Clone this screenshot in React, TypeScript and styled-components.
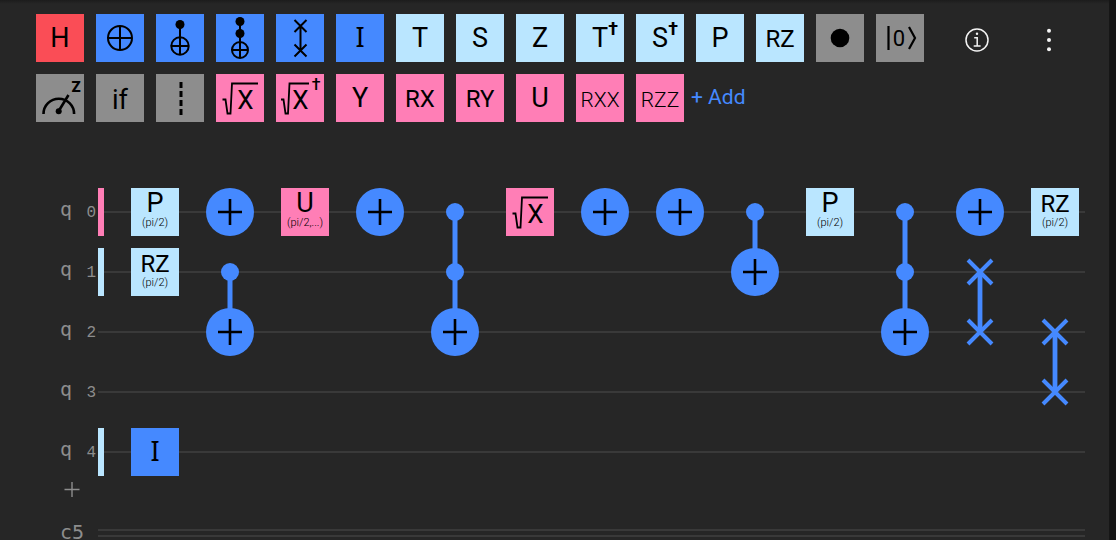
import React from "react";
import styled, { createGlobalStyle, css } from "styled-components";

const color = {
  page: "#161616",
  panel: "#262626",
  wire: "#393939",
  label: "#8d8d8d",
  red: "#fa4d56",
  blue: "#4589ff",
  sky: "#bae6ff",
  pink: "#ff7eb6",
  gray: "#8d8d8d",
};

type Tone = "red" | "blue" | "sky" | "pink" | "gray";

const GlobalStyle = createGlobalStyle`
  * { box-sizing: border-box; }
  body {
    margin: 0;
    background: ${color.page};
    font-family: Roboto, "Liberation Sans", sans-serif;
  }
`;

const Composer = styled.main`
  height: 100vh;
  margin-right: 7px;
  overflow: hidden;
  background: linear-gradient(#1c1c1c, ${color.panel} 4px);
`;

const Toolbar = styled.header`
  display: flex;
  justify-content: space-between;
  align-items: flex-start;
  padding: 14px 36px 0;
`;

const Palette = styled.div`
  display: flex;
  flex-direction: column;
  gap: 12px;
`;

const PaletteRow = styled.div`
  display: flex;
  gap: 7px;
`;

const GateGroup = styled.div`
  display: flex;
  gap: 12px;
`;

const PlainButton = styled.button`
  border: 0;
  padding: 0;
  background: none;
  color: inherit;
  font-family: inherit;
  cursor: pointer;
`;

const Gate = styled(PlainButton)<{ $tone: Tone }>`
  position: relative;
  flex: none;
  width: 48px;
  height: 48px;
  background: ${(p) => color[p.$tone]};
  color: #000;
  font-size: 27px;
  font-weight: 400;
  line-height: 48px;
  text-align: center;
  white-space: nowrap;
`;

const Symbol = styled.span<{ $length: number; $serif?: boolean }>`
  display: inline-block;
  line-height: 1;
  font-size: ${(p) => (p.$length > 2 ? 21 : p.$length > 1 ? 24 : 27)}px;
  font-weight: ${(p) => (p.$length > 2 ? 300 : 400)};
  ${(p) =>
    p.$serif &&
    css`
      font-family: "Noto Sans", sans-serif;
    `}
`;

const Dagger = styled.sup`
  position: absolute;
  top: 6px;
  right: 6px;
  font-size: 18px;
  font-weight: 700;
  line-height: 18px;
`;

const ParamGate = styled(Gate)`
  display: flex;
  flex-direction: column;
  align-items: center;
`;

const ParamName = styled.span`
  height: 28px;
  line-height: 31px;
`;

const Param = styled.span`
  font-size: 11px;
  font-weight: 300;
  line-height: 14px;
`;

const Art = styled.svg`
  display: block;
  overflow: visible;
`;

const AddButton = styled(PlainButton)`
  height: 45px;
  color: ${color.blue};
  font-size: 21px;
  font-weight: 400;
`;

const Tools = styled.div`
  display: flex;
  gap: 24px;
`;

const ToolButton = styled(PlainButton)`
  display: grid;
  place-items: center;
  width: 48px;
  height: 52px;
`;

const Circuit = styled.section`
  display: grid;
  padding: 60px 24px 0 60px;
`;

const Wires = styled.div`
  grid-area: 1 / 1;
  color: ${color.label};
`;

const Register = styled.div`
  display: flex;
  align-items: center;
  height: 60px;
`;

const RegisterName = styled.span`
  display: flex;
  flex: none;
  width: 38px;
  height: 60px;
  font-family: "DejaVu Sans Mono", monospace;
  font-size: 20px;
  line-height: 54px;
`;

const ClassicalName = styled(RegisterName)`
  line-height: 58px;
`;

const RegisterIndex = styled.span`
  margin-left: auto;
  padding-right: 2px;
  font-family: "Liberation Mono", monospace;
  font-size: 16px;
  line-height: 62px;
`;

const Phase = styled.span<{ $tone: Tone }>`
  width: 6px;
  height: 48px;
  background: ${(p) => color[p.$tone]};
`;

const Wire = styled.span`
  flex: 1;
  height: 2px;
  background: ${color.wire};
`;

const DoubleWire = styled.span`
  flex: 1;
  height: 8px;
  border: solid ${color.wire};
  border-width: 2px 0;
`;

const AddQubit = styled(PlainButton)`
  display: block;
  width: 24px;
  height: 15px;
  margin-bottom: 6px;
`;

const GateLayer = styled.div`
  grid-area: 1 / 1;
  display: grid;
  grid-template-columns: repeat(13, 48px);
  grid-template-rows: repeat(5, 60px);
  align-content: start;
  column-gap: 27px;
  margin-left: 71px;
`;

const Slot = styled.div<{ $column: number; $row: number; $span: number }>`
  grid-column: ${(p) => p.$column};
  grid-row: ${(p) => p.$row + 1} / span ${(p) => p.$span};
  padding: 6px 0;
`;

const LINE = { fill: "none", stroke: "#000", strokeWidth: 2 };

function Oplus({ cy = 24, r = 12 }) {
  return <path {...LINE} d={`M${24 - r} ${cy}a${r} ${r} 0 1 1 ${2 * r} 0a${r} ${r} 0 1 1 ${-2 * r} 0H${24 + r}M24 ${cy - r}v${2 * r}`} />;
}

const GateArt = ({ children }: { children: React.ReactNode }) => (
  <Art width="48" height="48" viewBox="0 0 48 48" aria-hidden="true">{children}</Art>
);

const art: Record<string, React.ReactNode> = {
  not: <GateArt><Oplus /></GateArt>,
  cnot: (
    <GateArt>
      <circle cx="24" cy="10.5" r="4.5" />
      <path {...LINE} d="M24 10V24" />
      <Oplus cy={32} r={8.7} />
    </GateArt>
  ),
  toffoli: (
    <GateArt>
      <circle cx="24" cy="7.5" r="4.5" />
      <circle cx="24" cy="19.5" r="4.5" />
      <path {...LINE} d="M24 7V28" />
      <Oplus cy={36} r={8} />
    </GateArt>
  ),
  swap: (
    <GateArt>
      <path {...LINE} d="M24.5 12V36M18.5 6l12 12m0-12l-12 12M18.5 30.5l12 12m0-12l-12 12" />
    </GateArt>
  ),
  control: <GateArt><circle cx="24" cy="24" r="9.3" /></GateArt>,
  reset: (
    <GateArt>
      <path {...LINE} strokeWidth={2.2} d="M12.5 12V36M33 13l6 11l-6 11" />
      <text x="23" y="32" fontSize="22" fontWeight="400" textAnchor="middle">0</text>
    </GateArt>
  ),
  measure: (
    <GateArt>
      <path {...LINE} strokeWidth={2.6} d="M7.5 40a15.3 15.3 0 0 1 30.6 0M22.7 37L32.5 21" />
      <circle cx="22.7" cy="37.3" r="3" />
      <text x="40" y="18" fontSize="15" fontWeight="900" textAnchor="middle">Z</text>
    </GateArt>
  ),
  if: (
    <GateArt>
      <text x="24" y="35" fontSize="27" textAnchor="middle">if</text>
    </GateArt>
  ),
  barrier: (
    <GateArt>
      <path {...LINE} strokeWidth={3} strokeDasharray="6 3" d="M25 8V41" />
    </GateArt>
  ),
  rootX: (
    <GateArt>
      <path {...LINE} strokeWidth={1.8} d="M6.5 25.5H9.5L11.5 39.5H14.5L16 9.5H42" />
      <text x="29.5" y="35" fontSize="26" textAnchor="middle">X</text>
    </GateArt>
  ),
  rootXDagger: (
    <GateArt>
      <path {...LINE} strokeWidth={1.8} d="M5 25.5H7.5L9.5 39.5H12L13.5 9.5H33" />
      <text x="24.5" y="35" fontSize="26" textAnchor="middle">X</text>
      <text x="40" y="16" fontSize="16" fontWeight="500" textAnchor="middle">†</text>
    </GateArt>
  ),
};

type Item = { tone: Tone; name: string; text?: string; dagger?: boolean };

const rowOne: Item[] = [
  { tone: "red", name: "H", text: "H" },
  { tone: "blue", name: "not" },
  { tone: "blue", name: "cnot" },
  { tone: "blue", name: "toffoli" },
  { tone: "blue", name: "swap" },
  { tone: "blue", name: "I", text: "I" },
  { tone: "sky", name: "T", text: "T" },
  { tone: "sky", name: "S", text: "S" },
  { tone: "sky", name: "Z", text: "Z" },
  { tone: "sky", name: "T dagger", text: "T", dagger: true },
  { tone: "sky", name: "S dagger", text: "S", dagger: true },
  { tone: "sky", name: "P", text: "P" },
  { tone: "sky", name: "RZ", text: "RZ" },
  { tone: "gray", name: "control" },
  { tone: "gray", name: "reset" },
];

const rowTwo: Item[] = [
  { tone: "gray", name: "measure" },
  { tone: "gray", name: "if" },
  { tone: "gray", name: "barrier" },
  { tone: "pink", name: "rootX" },
  { tone: "pink", name: "rootXDagger" },
  { tone: "pink", name: "Y", text: "Y" },
  { tone: "pink", name: "RX", text: "RX" },
  { tone: "pink", name: "RY", text: "RY" },
  { tone: "pink", name: "U", text: "U" },
  { tone: "pink", name: "RXX", text: "RXX" },
  { tone: "pink", name: "RZZ", text: "RZZ" },
];

function GateTile({ tone, name, text, dagger }: Item) {
  return (
    <Gate $tone={tone} type="button" aria-label={name}>
      {text ? <Symbol $length={text.length} $serif={text === "I"}>{text}</Symbol> : art[name]}
      {dagger && <Dagger>†</Dagger>}
    </Gate>
  );
}

function ParamTile({ tone, text, param }: { tone: Tone; text: string; param: string }) {
  return (
    <ParamGate $tone={tone} type="button">
      <ParamName><Symbol $length={text.length}>{text}</Symbol></ParamName>
      <Param>{param}</Param>
    </ParamGate>
  );
}

/* A NOT target on the last row it spans, with a control dot on each row above it. */
function NotGate({ controls = 0 }: { controls?: number }) {
  const height = 48 + controls * 60;
  const y = 24 + controls * 60;
  return (
    <Art width="48" height={height} viewBox={`0 0 48 ${height}`} role="img" aria-label="NOT">
      {controls > 0 && <path d={`M24 24V${y}`} stroke={color.blue} strokeWidth="5" />}
      {Array.from({ length: controls }, (_, i) => (
        <circle key={i} cx="24" cy={24 + i * 60} r="9" fill={color.blue} />
      ))}
      <circle cx="24" cy={y} r="24" fill={color.blue} />
      <path d={`M12 ${y}H36M24 ${y - 13}V${y + 13}`} stroke="#000" strokeWidth="2.6" />
    </Art>
  );
}

function SwapGate() {
  return (
    <Art width="48" height="108" viewBox="0 0 48 108" role="img" aria-label="SWAP" fill="none" stroke={color.blue}>
      <path strokeWidth="4.8" d="M24 24V84" />
      <path strokeWidth="4" d="M12 12l24 24m0-24L12 36M12 72l24 24m0-24L12 96" />
    </Art>
  );
}

type Placed = { column: number; row: number; span?: number; node: React.ReactNode };

const placed: Placed[] = [
  { column: 1, row: 0, node: <ParamTile tone="sky" text="P" param="(pi/2)" /> },
  { column: 1, row: 1, node: <ParamTile tone="sky" text="RZ" param="(pi/2)" /> },
  { column: 1, row: 4, node: <GateTile tone="blue" name="I" text="I" /> },
  { column: 2, row: 0, node: <NotGate /> },
  { column: 2, row: 1, span: 2, node: <NotGate controls={1} /> },
  { column: 3, row: 0, node: <ParamTile tone="pink" text="U" param="(pi/2,...)" /> },
  { column: 4, row: 0, node: <NotGate /> },
  { column: 5, row: 0, span: 3, node: <NotGate controls={2} /> },
  { column: 6, row: 0, node: <GateTile tone="pink" name="rootX" /> },
  { column: 7, row: 0, node: <NotGate /> },
  { column: 8, row: 0, node: <NotGate /> },
  { column: 9, row: 0, span: 2, node: <NotGate controls={1} /> },
  { column: 10, row: 0, node: <ParamTile tone="sky" text="P" param="(pi/2)" /> },
  { column: 11, row: 0, span: 3, node: <NotGate controls={2} /> },
  { column: 12, row: 0, node: <NotGate /> },
  { column: 12, row: 1, span: 2, node: <SwapGate /> },
  { column: 13, row: 0, node: <ParamTile tone="sky" text="RZ" param="(pi/2)" /> },
  { column: 13, row: 2, span: 2, node: <SwapGate /> },
];

const phases: (Tone | null)[] = ["pink", "sky", null, null, "sky"];

export default function App() {
  return (
    <Composer>
      <GlobalStyle />
      <Toolbar>
        <Palette>
          <PaletteRow>
            <GateGroup>{rowOne.map((g) => <GateTile key={g.name} {...g} />)}</GateGroup>
          </PaletteRow>
          <PaletteRow>
            <GateGroup>{rowTwo.map((g) => <GateTile key={g.name} {...g} />)}</GateGroup>
            <AddButton type="button">+ Add</AddButton>
          </PaletteRow>
        </Palette>
        <Tools>
          <ToolButton type="button" aria-label="Information">
            <Art width="24" height="24" viewBox="0 0 24 24" fill="none" stroke="#f4f4f4" strokeWidth="1.5">
              <circle cx="12" cy="12" r="11" />
              <path d="M9.2 9.8H12.2V18M8.7 18H15.6" />
              <circle cx="12" cy="5.8" r="1.2" fill="#f4f4f4" stroke="none" />
            </Art>
          </ToolButton>
          <ToolButton type="button" aria-label="More options">
            <Art width="24" height="24" viewBox="0 0 24 24" fill="#f4f4f4">
              <circle cx="12" cy="2.7" r="2" />
              <circle cx="12" cy="12" r="2" />
              <circle cx="12" cy="21.3" r="2" />
            </Art>
          </ToolButton>
        </Tools>
      </Toolbar>
      <Circuit>
        <Wires>
          {phases.map((tone, i) => (
            <Register key={i}>
              <RegisterName>
                q<RegisterIndex>{i}</RegisterIndex>
              </RegisterName>
              {tone && <Phase $tone={tone} />}
              <Wire />
            </Register>
          ))}
          <AddQubit type="button" aria-label="Add qubit">
            <Art width="24" height="15" viewBox="0 0 24 15" fill="none" stroke={color.label} strokeWidth="1.4">
              <path d="M4.5 7.5h15M12 0v15" />
            </Art>
          </AddQubit>
          <Register>
            <ClassicalName>c5</ClassicalName>
            <DoubleWire />
          </Register>
        </Wires>
        <GateLayer>
          {placed.map((p, i) => (
            <Slot key={i} $column={p.column} $row={p.row} $span={p.span ?? 1}>
              {p.node}
            </Slot>
          ))}
        </GateLayer>
      </Circuit>
    </Composer>
  );
}
